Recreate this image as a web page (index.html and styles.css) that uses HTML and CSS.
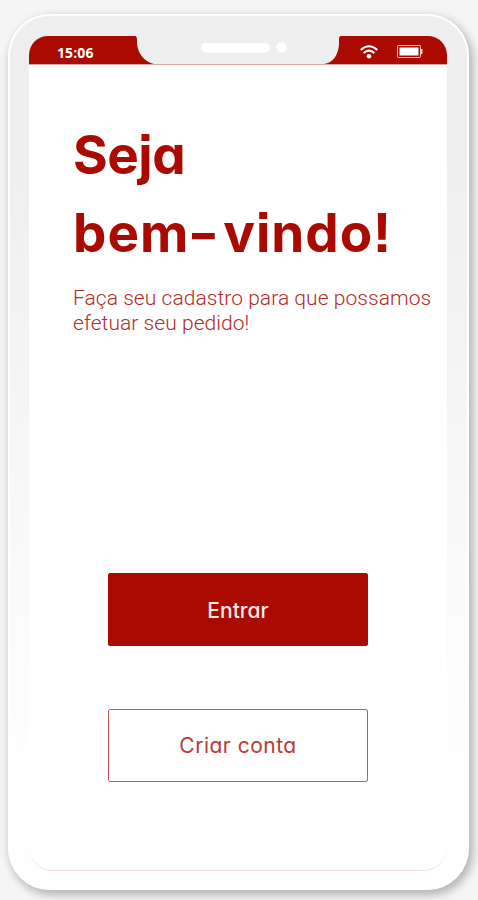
FILE: index.html
```html
<!DOCTYPE html>
<html lang="pt-BR">
<head>
    <meta charset="UTF-8">
    <meta name="viewport" content="width=device-width, initial-scale=1.0">
    <title>Seja bem-vindo!</title>
    <link rel="stylesheet" href="styles.css">
</head>
<body>

    <div class="phone">
        <div class="screen">

            <header class="status-bar">
                <span class="time">15:06</span>
                <svg class="notch" width="206" height="28" viewBox="0 0 206 28">
                    <path d="M0 0 Q2 0 2 4 V8 C3 18 10 26 19 28 H189 C198 27 203 19 204 9 V3 Q204 0 206 0 Z" fill="#eeeeee"/>
                    <rect x="66" y="7" width="69" height="9.500" rx="4.700" fill="#fff"/>
                    <circle cx="146.500" cy="11.300" r="5.300" fill="#fff"/>
                </svg>
                <div class="status-icons">
                    <svg width="18" height="15" viewBox="0 0 18 15" fill="none" stroke="#fff" stroke-width="2">
                        <path d="M.7 5 Q9 -2.400 17.300 5"/>
                        <path d="M3.600 8 Q9 3.300 14.400 8"/>
                        <circle cx="9" cy="11.200" r="2.300" fill="#fff" stroke="none"/>
                    </svg>
                    <svg width="26" height="13" viewBox="0 0 26 13">
                        <rect x=".5" y=".5" width="23" height="12" rx="1" fill="none" stroke="#fff" stroke-opacity=".8"/>
                        <rect x="2.500" y="2.500" width="19" height="8" fill="#fff"/>
                        <rect x="24" y="4" width="1.500" height="5" fill="#fff" fill-opacity=".8"/>
                    </svg>
                </div>
            </header>

            <main class="content">
                <h1><span class="seja">Seja</span><br>bem<span class="hyphen">-</span>vindo!</h1>
                <p>Faça seu cadastro para que possamos<br>efetuar seu pedido!</p>

                <div class="actions">
                    <button class="btn btn-primary" type="button">Entrar</button>
                    <button class="btn btn-outline" type="button">Criar conta</button>
                </div>
            </main>

        </div>
    </div>

</body>
</html>
```

FILE: styles.css
```css
* {
    box-sizing: border-box;
}
body {
    margin: 0;
    height: 900px;
    padding: 14px 9px 0 8px;
    background-color: #f5f5f5;
    overflow: hidden;
}
.phone {
    height: 876px;
    padding: 20px 19px 18px;
    border: 2px solid #fff;
    border-radius: 42px;
    background: linear-gradient(#eeeeee 0, #eeeeee 15%, #f9f9f9 60%, #fefefe 85%);
    box-shadow: 3px 4px 10px 1px rgba(0, 0, 0, .27);
}
.screen {
    width: 418px;
    height: 835px;
    border-bottom: 1px solid #f1dedc;
    border-radius: 19px 19px 24px 24px;
    background-color: #fff;
    overflow: hidden;
}
.status-bar {
    position: relative;
    display: flex;
    justify-content: space-between;
    height: 29px;
    padding: 0 24px 0 28px;
    background-color: #aa0a00;
    border-bottom: 1px solid #dba5a2;
    color: #fff;
}
.time {
    font: 700 14px/34px "Open Sans", sans-serif;
    letter-spacing: .1px;
}
.notch {
    position: absolute;
    left: 106px;
    top: 0;
}
.status-icons {
    display: flex;
    gap: 19px;
    padding-top: 9px;
}
.content {
    padding: 51px 0 0 44px;
    color: #aa0a00;
}
h1 {
    margin: 0;
    font: 750 53px/78px Inter, sans-serif;
    font-feature-settings: "cv11", "ss07";
    letter-spacing: 1px;
}
.seja {
    letter-spacing: -.5px;
}
/* wider dash than the font's own */
.hyphen {
    display: inline-block;
    transform: scaleX(1.3);
    margin: 0 6px 0 2px;
}
p {
    margin: 14px 0 0;
    font: 300 21px/25px Roboto, sans-serif;
    letter-spacing: .05px;
    color: #b22b25;
    white-space: nowrap;
}
.actions {
    display: flex;
    flex-direction: column;
    gap: 63px;
    width: 260px;
    margin: 237px 0 0 35px;
}
.btn {
    height: 73px;
    padding: 0;
    border: 1px solid #aa0a00;
    border-radius: 2px;
    font: 400 21px Inter, sans-serif;
    font-feature-settings: "cv11";
}
.btn-primary {
    padding-top: 2px;
    background-color: #aa0a00;
    color: #fbe9e8;
    font-weight: 500;
}
.btn-outline {
    background-color: #fff;
    border-color: #c65a55;
    color: #b93a34;
    letter-spacing: .5px;
}
```
